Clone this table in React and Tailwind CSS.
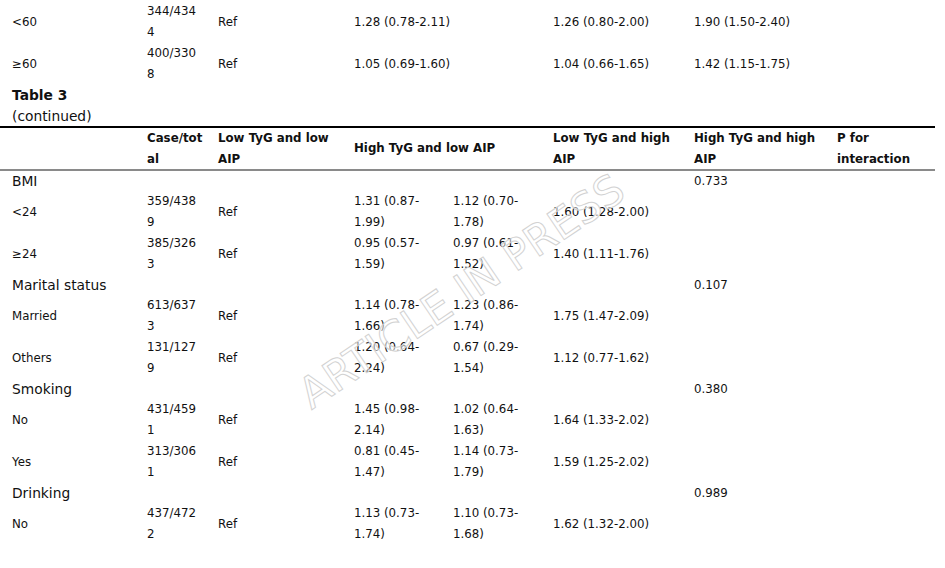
import React from 'react';

const grid = 'grid grid-cols-[141px_71px_136px_99px_100px_141px_143px_104px] w-[935px]';

const topRows = [
    { label: '<60', c1: '344/434', c2: '4', a: '1.28 (0.78-2.11)', b: '1.26 (0.80-2.00)', c: '1.90 (1.50-2.40)' },
    { label: '≥60', c1: '400/330', c2: '8', a: '1.05 (0.69-1.60)', b: '1.04 (0.66-1.65)', c: '1.42 (1.15-1.75)' },
];

const groups = [
    {
        name: 'BMI',
        p: '0.733',
        rows: [
            { label: '<24', c1: '359/438', c2: '9', h1: ['1.31 (0.87-', '1.99)'], h2: ['1.12 (0.70-', '1.78)'], lh: '1.60 (1.28-2.00)' },
            { label: '≥24', c1: '385/326', c2: '3', h1: ['0.95 (0.57-', '1.59)'], h2: ['0.97 (0.61-', '1.52)'], lh: '1.40 (1.11-1.76)' },
        ],
    },
    {
        name: 'Marital status',
        p: '0.107',
        rows: [
            { label: 'Married', c1: '613/637', c2: '3', h1: ['1.14 (0.78-', '1.66)'], h2: ['1.23 (0.86-', '1.74)'], lh: '1.75 (1.47-2.09)' },
            { label: 'Others', c1: '131/127', c2: '9', h1: ['1.20 (0.64-', '2.24)'], h2: ['0.67 (0.29-', '1.54)'], lh: '1.12 (0.77-1.62)' },
        ],
    },
    {
        name: 'Smoking',
        p: '0.380',
        rows: [
            { label: 'No', c1: '431/459', c2: '1', h1: ['1.45 (0.98-', '2.14)'], h2: ['1.02 (0.64-', '1.63)'], lh: '1.64 (1.33-2.02)' },
            { label: 'Yes', c1: '313/306', c2: '1', h1: ['0.81 (0.45-', '1.47)'], h2: ['1.14 (0.73-', '1.79)'], lh: '1.59 (1.25-2.02)' },
        ],
    },
    {
        name: 'Drinking',
        p: '0.989',
        rows: [
            { label: 'No', c1: '437/472', c2: '2', h1: ['1.13 (0.73-', '1.74)'], h2: ['1.10 (0.73-', '1.68)'], lh: '1.62 (1.32-2.00)' },
        ],
    },
];

const Cell = ({ children, first, span }) => (
    <div className={`${first ? 'pl-[12px]' : 'pl-[6px]'} ${span ? 'col-span-2' : ''} flex items-center`}>
        {children}
    </div>
);

const TwoLine = ({ a, b }) => (
    <div className="pl-[6px] flex flex-col justify-center">
        <span>{a}</span>
        <span>{b}</span>
    </div>
);

const App = () => {
    return (
        <div className="relative w-[945px] h-[568px] overflow-hidden bg-white text-[#111] font-['DejaVu_Sans',sans-serif] text-[11.8px] leading-[21px]">
            {/* tail of the previous page */}
            {topRows.map(r => (
                <div key={r.label} className={`${grid} h-[42px] pt-px`}>
                    <Cell first>{r.label}</Cell>
                    <TwoLine a={r.c1} b={r.c2} />
                    <Cell>Ref</Cell>
                    <Cell span>{r.a}</Cell>
                    <Cell>{r.b}</Cell>
                    <Cell>{r.c}</Cell>
                    <Cell />
                </div>
            ))}

            <div className="pl-[12px] text-[13.8px] pt-px h-[42px]">
                <div className="font-bold leading-[20.5px]">Table 3</div>
                <div className="leading-[20.5px]">(continued)</div>
            </div>

            <div className={`${grid} border-t-2 border-black border-b-2 border-b-[#8a8a8a] font-bold leading-[20.5px]`}>
                <Cell first />
                <TwoLine a="Case/tot" b="al" />
                <TwoLine a="Low TyG and low" b="AIP" />
                <Cell span>High TyG and low AIP</Cell>
                <TwoLine a="Low TyG and high" b="AIP" />
                <TwoLine a="High TyG and high" b="AIP" />
                <TwoLine a="P for" b="interaction" />
            </div>

            {groups.map(g => (
                <React.Fragment key={g.name}>
                    <div className={`${grid} h-[20px] leading-[20px]`}>
                        <div className="col-span-6 pl-[12px] text-[13.8px]">{g.name}</div>
                        <div className="pl-[6px]">{g.p}</div>
                        <div />
                    </div>
                    {g.rows.map(r => (
                        <div key={g.name + r.label} className={`${grid} h-[42px]`}>
                            <Cell first>{r.label}</Cell>
                            <TwoLine a={r.c1} b={r.c2} />
                            <Cell>Ref</Cell>
                            <TwoLine a={r.h1[0]} b={r.h1[1]} />
                            <TwoLine a={r.h2[0]} b={r.h2[1]} />
                            <Cell>{r.lh}</Cell>
                            <Cell />
                            <Cell />
                        </div>
                    ))}
                </React.Fragment>
            ))}

            {/* watermark */}
            <div className="pointer-events-none absolute left-[462px] top-[292px] -translate-x-1/2 -translate-y-1/2 -rotate-[34deg] whitespace-nowrap text-[42.5px] leading-none text-[rgba(255,255,255,0.55)] [-webkit-text-stroke:1px_#d2d2d2]">
                ARTICLE IN PRESS
            </div>
        </div>
    );
};

export default App;
